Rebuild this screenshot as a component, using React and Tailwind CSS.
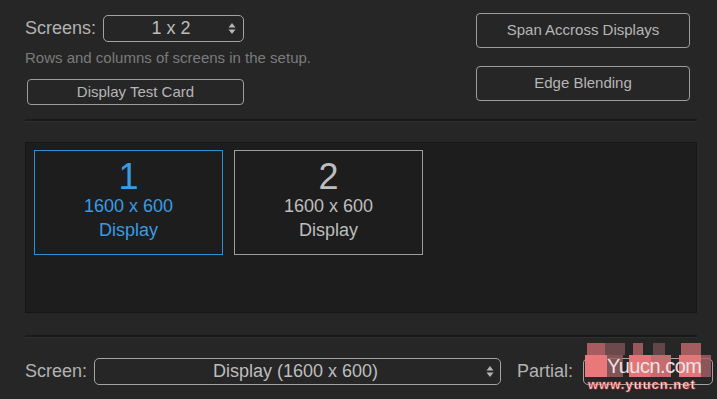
function Arrows() {
  return (
    <svg width="8" height="13" viewBox="0 0 8 13" className="shrink-0">
      <path d="M4 1 L7.5 5.5 L0.5 5.5 Z" fill="#b5b5b5" />
      <path d="M4 12 L7.5 7.5 L0.5 7.5 Z" fill="#b5b5b5" />
    </svg>
  )
}

function Divider() {
  return <div className="h-[3px] border-t-2 border-t-[#191919] border-b border-b-[#2f2f2f]" />
}

function Card({ n, active }) {
  const tone = active
    ? 'border-[#2f8fd6] text-[#3a9be2]'
    : 'border-[#9d9d9d] text-[#bdbdbd]'
  return (
    <div className={`w-[189px] h-[105px] border flex flex-col items-center pt-[9px] ${tone}`}>
      <div className="text-[36px] leading-[34px]">{n}</div>
      <div className="text-[18px] leading-[24px]">1600 x 600</div>
      <div className="text-[18px] leading-[24px]">Display</div>
    </div>
  )
}

export default function App() {
  return (
    <div className="w-[717px] h-[399px] bg-[#262626] overflow-hidden relative font-['Liberation_Sans',Arial,sans-serif]">
      <div className="pl-[25px] pr-[20px]">
        <div className="flex justify-between items-start pt-[13px]">
          <div>
            <div className="flex items-center gap-[7px] mt-[2px]">
              <span className="text-[18px] text-[#b3b3b3]">Screens:</span>
              <div className="w-[141px] h-[27px] border border-[#a3a3a3] rounded-[5px] flex items-center pl-[10px] pr-[7px]">
                <span className="flex-1 text-center text-[18px] text-[#bdbdbd]">1 x 2</span>
                <Arrows />
              </div>
            </div>
            <div className="mt-[7px] text-[15px] leading-[18px] text-[#7b7b7b]">
              Rows and columns of screens in the setup.
            </div>
            <button className="mt-[12px] ml-[2px] w-[217px] h-[26px] border border-[#9c9c9c] rounded-[4px] text-[15px] text-[#b6b6b6] flex items-center justify-center">
              Display Test Card
            </button>
          </div>
          <div className="w-[214px] mr-[7px] flex flex-col gap-[18px]">
            <button className="h-[35px] border border-[#9c9c9c] rounded-[4px] text-[15px] text-[#b6b6b6] flex items-center justify-center">
              Span Accross Displays
            </button>
            <button className="h-[35px] border border-[#9c9c9c] rounded-[4px] text-[15px] text-[#b6b6b6] flex items-center justify-center">
              Edge Blending
            </button>
          </div>
        </div>

        <div className="mt-[14px]">
          <Divider />
        </div>

        <div className="mt-[20px] h-[171px] bg-[#1d1d1d] border border-[#161616] pl-[8px] pt-[7px] flex items-start gap-[11px]">
          <Card n="1" active />
          <Card n="2" />
        </div>

        <div className="mt-[22px]">
          <Divider />
        </div>

        <div className="mt-[20px] flex items-center">
          <span className="shrink-0 text-[18px] text-[#b3b3b3]">Screen:</span>
          <div className="ml-[7px] w-[407px] h-[27px] shrink-0 border border-[#a3a3a3] rounded-[5px] flex items-center pl-[10px] pr-[6px]">
            <span className="flex-1 text-center text-[18px] text-[#bdbdbd]">Display (1600 x 600)</span>
            <Arrows />
          </div>
          <span className="shrink-0 ml-[16px] text-[18px] text-[#b3b3b3]">Partial:</span>
          <div className="ml-[10px] w-[130px] h-[27px] shrink-0 border border-[#a3a3a3] rounded-[5px]" />
        </div>
      </div>

      {/* watermark */}
      <div className="absolute left-[585px] top-[343px] w-[130px] h-[50px]">
        <div className="absolute left-[2px] top-[0px] w-[18px] h-[12px] bg-[#c86a6e]/80" />
        <div className="absolute left-[20px] top-[0px] w-[20px] h-[12px] bg-[#8a5a5c]/70" />
        <div className="absolute left-[48px] top-[0px] w-[10px] h-[12px] bg-[#b86468]/80" />
        <div className="absolute left-[68px] top-[0px] w-[12px] h-[12px] bg-[#7d5456]/70" />
        <div className="absolute left-[96px] top-[0px] w-[20px] h-[12px] bg-[#c46a6e]/80" />
        <div className="absolute left-[0px] top-[12px] w-[22px] h-[22px] bg-[#e8787a]" />
        <div className="absolute left-[22px] top-[12px] w-[16px] h-[22px] bg-[#9b5f62]/80" />
        <div className="absolute left-[44px] top-[12px] w-[22px] h-[22px] bg-[#e47477]" />
        <div className="absolute left-[66px] top-[12px] w-[20px] h-[22px] bg-[#c66b6f]" />
        <div className="absolute left-[94px] top-[12px] w-[22px] h-[22px] bg-[#e0787b]" />
        <div className="absolute left-[116px] top-[12px] w-[10px] h-[22px] bg-[#a86266]/80" />
        <div className="absolute left-[22px] top-[11px] text-[20px] leading-[24px] text-[#e6e6e6] tracking-[-0.5px]">
          Yuucn.com
        </div>
        <div className="absolute left-[3px] top-[34px] text-[13px] leading-[16px] font-bold text-white [-webkit-text-stroke:0.6px_#d23c3c] tracking-[1px]">
          www.yuucn.net
        </div>
      </div>
    </div>
  )
}
